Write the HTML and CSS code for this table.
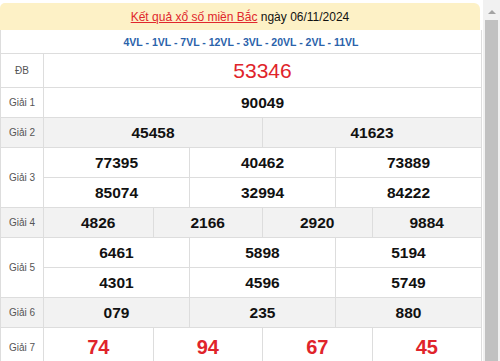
FILE: index.html
```html
<!DOCTYPE html>
<html>
<head>
<meta charset="utf-8">
<link rel="stylesheet" href="styles.css">
</head>
<body>
<div class="page">
  <div class="main">
    <div class="title"><a class="title-link" href="#">Kết quả xổ số miền Bắc</a> ngày 06/11/2024</div>
    <div class="codes">4VL - 1VL - 7VL - 12VL - 3VL - 20VL - 2VL - 11VL</div>
    <div class="row db">
      <div class="label">ĐB</div>
      <div class="cells"><div class="cell special">53346</div></div>
    </div>
    <div class="row">
      <div class="label">Giải 1</div>
      <div class="cells"><div class="cell">90049</div></div>
    </div>
    <div class="row alt">
      <div class="label">Giải 2</div>
      <div class="cells"><div class="cell">45458</div><div class="cell">41623</div></div>
    </div>
    <div class="row">
      <div class="label">Giải 3</div>
      <div class="stack">
        <div class="cells sub"><div class="cell">77395</div><div class="cell">40462</div><div class="cell">73889</div></div>
        <div class="cells"><div class="cell">85074</div><div class="cell">32994</div><div class="cell">84222</div></div>
      </div>
    </div>
    <div class="row alt">
      <div class="label">Giải 4</div>
      <div class="cells"><div class="cell">4826</div><div class="cell">2166</div><div class="cell">2920</div><div class="cell">9884</div></div>
    </div>
    <div class="row">
      <div class="label">Giải 5</div>
      <div class="stack">
        <div class="cells sub"><div class="cell">6461</div><div class="cell">5898</div><div class="cell">5194</div></div>
        <div class="cells"><div class="cell">4301</div><div class="cell">4596</div><div class="cell">5749</div></div>
      </div>
    </div>
    <div class="row alt">
      <div class="label">Giải 6</div>
      <div class="cells"><div class="cell">079</div><div class="cell">235</div><div class="cell">880</div></div>
    </div>
    <div class="row g7">
      <div class="label">Giải 7</div>
      <div class="cells"><div class="cell big">74</div><div class="cell big">94</div><div class="cell big">67</div><div class="cell big">45</div></div>
    </div>
  </div>
  <div class="scrollbar">
    <div class="arrow"></div>
    <div class="thumb"></div>
  </div>
</div>
</body>
</html>
```
FILE: styles.css
```css
* { box-sizing: border-box; }
html, body { margin: 0; padding: 0; background: #fff; overflow: hidden; }
body { font-family: "Liberation Sans", Arial, sans-serif; color: #111; }
.page { display: flex; width: 500px; height: 361px; overflow: hidden; }
.main { width: 482px; flex: none; padding-top: 3px; }
.title {
  height: 27px;
  background: #fdf1c6;
  border-radius: 5px 6px 0 0;
  margin-right: 2px;
  display: flex; align-items: center; justify-content: center;
  font-size: 12px; color: #111;
  white-space: pre;
}
.title-link { color: #e0262c; text-decoration: underline; }
.codes {
  height: 24px;
  border-left: 1px solid #ddd; border-right: 1px solid #ddd; border-bottom: 1px solid #ddd;
  display: flex; align-items: center; justify-content: center;
  font-size: 10.5px; font-weight: bold; color: #2a62aa;
}
.row {
  display: flex;
  border-left: 1px solid #ddd; border-right: 1px solid #ddd; border-bottom: 1px solid #ddd;
  min-height: 30px;
}
.row.alt { background: #f2f2f2; }
.row.db { height: 34px; }
.row.g7 { height: 40px; }
.label {
  width: 42px; flex: none;
  display: flex; align-items: center; justify-content: center;
  font-size: 10px; color: #555;
}
.stack { flex: 1; display: flex; flex-direction: column; }
.cells { flex: 1; display: flex; min-height: 29px; }
.cells.sub { border-bottom: 1px solid #ddd; min-height: 30px; flex: none; }
.cell {
  flex: 1 1 0; border-left: 1px solid #ddd;
  display: flex; align-items: center; justify-content: center;
  font-size: 15.5px; font-weight: bold; color: #111;
}
.cell.special { font-size: 21px; font-weight: normal; color: #e0242b; }
.cell.big { font-size: 20px; color: #e0242b; }
.scrollbar {
  flex: 1; background: #f1f1f1;
  display: flex; flex-direction: column; align-items: center;
  padding-top: 10px; margin-left: 1px;
}
.arrow {
  width: 0; height: 0;
  border-left: 4px solid transparent; border-right: 4px solid transparent;
  border-bottom: 4px solid #a3a3a3;
}
.thumb { margin-top: 6px; width: 13px; flex: 1; background: #c1c1c1; }
```
